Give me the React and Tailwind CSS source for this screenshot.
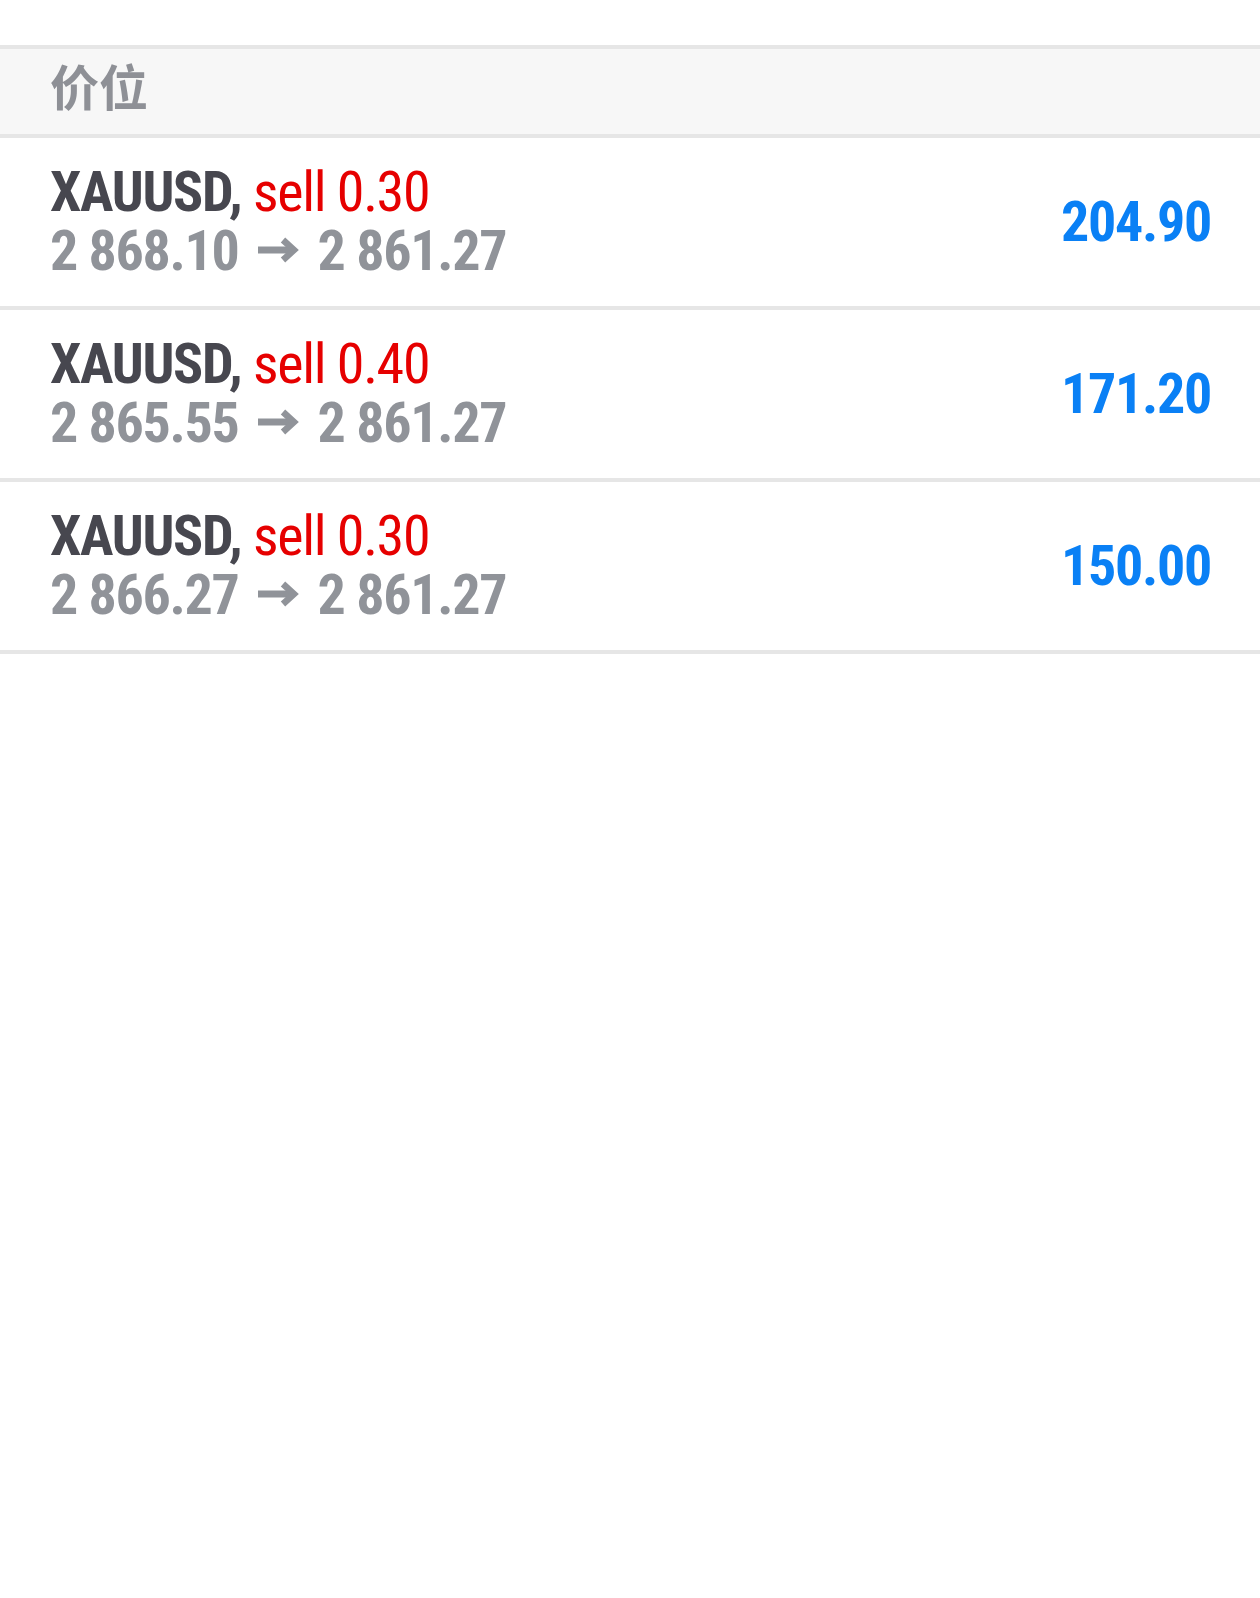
const trades = [
  { symbol: "XAUUSD", side: "sell", volume: "0.30", open: "2 868.10", current: "2 861.27", profit: "204.90" },
  { symbol: "XAUUSD", side: "sell", volume: "0.40", open: "2 865.55", current: "2 861.27", profit: "171.20" },
  { symbol: "XAUUSD", side: "sell", volume: "0.30", open: "2 866.27", current: "2 861.27", profit: "150.00" },
];

const font = { fontFamily: "'Roboto Condensed', Roboto, 'Noto Sans CJK SC', sans-serif" };

// arrow between open and current price
function Arrow() {
  return (
    <svg
      viewBox="0 0 41 26"
      className="inline-block w-[41px] h-[26px] mx-[19px] align-[7px]"
      role="img"
      aria-label="→"
    >
      <path d="M0 9.5h35v7H0z" fill="#909399" />
      <path d="M25 3l11 10-11 10" fill="none" stroke="#909399" strokeWidth="6.5" />
    </svg>
  );
}

export default function App() {
  return (
    <div className="min-h-[1598px] w-[1260px] bg-white" style={font}>
      <div className="h-[45px]" />
      <div className="h-[89px] border-t-4 border-[#e6e6e6] bg-[#f7f7f7] flex items-center pl-[50px] pb-[15px]">
        <span
          className="text-[49px] font-bold text-[#8e9096] leading-none"
          style={{ fontFamily: "'Noto Sans CJK SC', sans-serif" }}
        >
          价位
        </span>
      </div>
      {trades.map((t, i) => (
        <div
          key={i}
          className="h-[172px] border-t-4 border-[#e6e6e6] flex items-center justify-between pl-[50px] pr-[49px] font-stretch-condensed tracking-[-1.3px]"
        >
          <div className="text-[56px] leading-[59px]">
            <div>
              <span className="font-bold text-[#47474f]">{t.symbol},</span>{" "}
              <span className="text-[#e60000]">
                {t.side} {t.volume}
              </span>
            </div>
            <div className="font-bold text-[#909399] whitespace-nowrap">
              {t.open}
              <Arrow />
              {t.current}
            </div>
          </div>
          <div className="text-[56px] font-bold text-[#0a80f5] leading-none">{t.profit}</div>
        </div>
      ))}
      <div className="border-t-4 border-[#e6e6e6]" />
    </div>
  );
}
